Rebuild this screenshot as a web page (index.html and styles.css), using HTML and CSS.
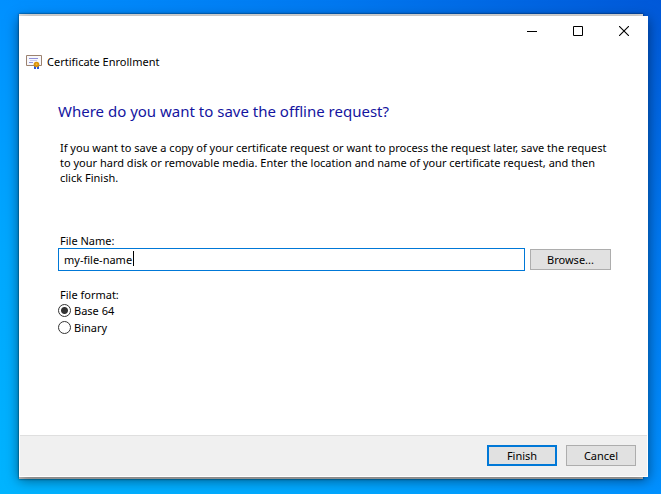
FILE: index.html
```html
<!DOCTYPE html>
<html lang="en">
<head>
    <meta charset="UTF-8">
    <meta name="viewport" content="width=device-width, initial-scale=1.0">
    <title>Certificate Enrollment</title>
    <link rel="stylesheet" href="styles.css">
</head>
<body>
    <form class="window">
        <div class="titlebar">
            <button type="button" class="caption" aria-label="Minimize">
                <svg width="10" height="10" viewBox="0 0 10 10"><path d="M0 5.5h10" stroke="#000"/></svg>
            </button>
            <button type="button" class="caption" aria-label="Maximize">
                <svg width="10" height="10" viewBox="0 0 10 10"><path d="M.5.5h9v9h-9z" fill="none" stroke="#000"/></svg>
            </button>
            <button type="button" class="caption" aria-label="Close">
                <svg width="10" height="10" viewBox="0 0 10 10"><path d="M0 0l10 10M10 0L0 10" stroke="#000" stroke-width="1.1"/></svg>
            </button>
        </div>

        <header class="header">
            <svg width="16" height="14" viewBox="0 0 16 14">
                <path d="M.5.5h15v10H.5z" fill="#f8f8fc" stroke="#9c8270"/>
                <path d="M3 3.5h9M3 7.5h4" stroke="#8f90d8"/>
                <path d="M4 5.5h7" stroke="#c9c9ee"/>
                <path d="M8 10h2v4H8zM11 10h2v4h-2z" fill="#2a55d8"/>
                <circle cx="10.5" cy="9.500" r="2.800" fill="#d8920c"/>
                <circle cx="10.5" cy="9.200" r="1" fill="#f3b93a"/>
            </svg>
            <span>Certificate Enrollment</span>
        </header>

        <main class="content">
            <h1>Where do you want to save the offline request?</h1>
            <p>If you want to save a copy of your certificate request or want to process the request later, save the request<br>
            to your hard disk or removable media. Enter the location and name of your certificate request, and then<br>
            click Finish.</p>

            <label class="label" for="filename">File Name:</label>
            <div class="file-row">
                <div class="field">
                    <input type="text" id="filename" value="my-file-name">
                    <span class="caret"></span>
                </div>
                <button type="button" class="browse">Browse...</button>
            </div>

            <fieldset>
                <legend class="label">File format:</legend>
                <label class="option"><input type="radio" name="format" value="base64" checked>Base 64</label>
                <label class="option"><input type="radio" name="format" value="binary">Binary</label>
            </fieldset>
        </main>

        <footer class="footer">
            <button type="submit" class="primary">Finish</button>
            <button type="button">Cancel</button>
        </footer>
    </form>
</body>
</html>
```
FILE: styles.css
```css
* {
    box-sizing: border-box;
}
body {
    margin: 0;
    min-height: 100vh;
    display: flex;
    padding: 16px 13px 17px 19px;
    font-family: "Noto Sans", "Segoe UI", sans-serif;
    font-size: 11px;
    line-height: 15px;
    color: #000;
    background: linear-gradient(to top right, #00b4ff 0%, #00a8ff 25%, #0090ff 50%, #0078f0 75%, #0058d8 100%);
}
.window {
    position: relative;
    flex: 1;
    min-width: 0;
    display: flex;
    flex-direction: column;
    background: #fff;
    box-shadow: 0 3px 12px rgba(0, 0, 0, 0.5);
}
/* grey frame edge showing above and below the window */
.window::before {
    content: "";
    position: absolute;
    z-index: -1;
    top: -2px;
    right: 5px;
    bottom: -2px;
    left: 0;
    background: linear-gradient(#e8e8e8, #d0d0d0);
    box-shadow: 0 0 2px rgba(0, 0, 0, 0.7);
}
.titlebar {
    display: flex;
    justify-content: flex-end;
    height: 30px;
    padding-right: 1px;
}
.titlebar .caption {
    display: flex;
    align-items: center;
    justify-content: center;
    width: 46px;
    height: 30px;
    border: none;
    background: none;
}
.header {
    display: flex;
    align-items: center;
    gap: 5px;
    height: 31px;
    padding-left: 7px;
}
.content {
    flex: 1;
    padding: 22px 33px 0 39px;
}
h1 {
    margin: 0;
    font-size: 15px;
    font-weight: normal;
    line-height: 24px;
    color: #1414a0;
}
p {
    margin: 17px 0 48px;
    padding-left: 2px;
    white-space: nowrap;
}
.label {
    display: block;
    padding: 0 2px;
}
.file-row {
    display: flex;
    align-items: center;
    gap: 5px;
    margin-right: 4px;
}
.field {
    position: relative;
    flex: 1;
}
.field input {
    display: block;
    width: 100%;
    height: 23px;
    padding: 0 5px;
    border: 1px solid #0078d7;
    outline: none;
    font: inherit;
    background: #fff;
}
.caret {
    position: absolute;
    top: 3px;
    left: 75px;
    width: 1px;
    height: 15px;
    background: #000;
}
button {
    width: 70px;
    height: 21px;
    padding: 0;
    border: 1px solid #adadad;
    font: inherit;
    color: #000;
    background: #e1e1e1;
}
.browse {
    width: 81px;
}
fieldset {
    margin: 16px 0 0;
    padding: 0;
    border: none;
}
.option {
    display: flex;
    align-items: center;
    gap: 3px;
    height: 17px;
}
.option input {
    appearance: none;
    width: 13px;
    height: 13px;
    margin: 0;
    border: 1px solid #333;
    border-radius: 50%;
    background: #fff;
}
.option input:checked {
    background: radial-gradient(circle, #333 3px, #fff 4px);
}
.footer {
    display: flex;
    justify-content: flex-end;
    gap: 9px;
    margin: 0 1px 1px;
    padding: 9px 11px 10px;
    border-top: 1px solid #dfdfdf;
    background: #f0f0f0;
}
.footer .primary {
    border: 2px solid #0078d7;
}
```
